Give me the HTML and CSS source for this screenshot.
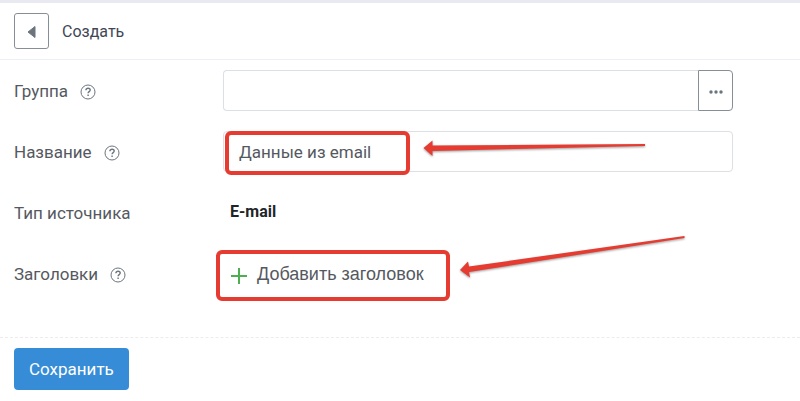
FILE: index.html
```html
<!doctype html>
<html lang="ru">

<head>
    <meta charset="utf-8">
    <title>Создать</title>
    <link rel="stylesheet" href="styles.css">
</head>

<body>
    <header class="header">
        <button class="back" type="button" aria-label="Назад">
            <svg width="10" height="14" viewBox="0 0 10 14"><path d="M8 1.500v11L1 7z" fill="#6c757d" stroke="#6c757d" stroke-linejoin="round"/></svg>
        </button>
        <h1 class="title">Создать</h1>
    </header>

    <form class="form">
        <div class="rows">
            <div class="row">
                <div class="caption">
                    <label for="group">Группа</label>
                    <svg class="help" viewBox="0 0 16 16"><circle cx="8" cy="8" r="7"/><path class="mark" d="M5.9 6.3c.1-1.3 1-2 2.2-2s2.1.7 2.1 1.8c0 1.5-2.1 1.5-2.1 3.2M8.1 10.6v1.4"/></svg>
                </div>
                <div class="field group">
                    <input class="input" id="group" type="text">
                    <button class="more" type="button" aria-label="Выбрать">
                        <svg width="14" height="4" viewBox="0 0 14 4"><g fill="#6c757d"><circle cx="2" cy="2" r="1.7"/><circle cx="7" cy="2" r="1.7"/><circle cx="12" cy="2" r="1.7"/></g></svg>
                    </button>
                </div>
            </div>

            <div class="row">
                <div class="caption">
                    <label for="name">Название</label>
                    <svg class="help" viewBox="0 0 16 16"><circle cx="8" cy="8" r="7"/><path class="mark" d="M5.9 6.3c.1-1.3 1-2 2.2-2s2.1.7 2.1 1.8c0 1.5-2.1 1.5-2.1 3.2M8.1 10.6v1.4"/></svg>
                </div>
                <div class="field">
                    <input class="input" id="name" type="text" value="Данные из email">
                    <span class="frame frame-name"></span>
                    <svg class="arrow arrow-name" width="224" height="20" viewBox="0 0 224 20"><path d="M.5 10L9.500 2.500v5L222 6v2L9.500 13v5z"/></svg>
                </div>
            </div>

            <div class="row">
                <div class="caption">Тип источника</div>
                <div class="field type">E-mail</div>
            </div>

            <div class="row">
                <div class="caption">
                    <span>Заголовки</span>
                    <svg class="help" viewBox="0 0 16 16"><circle cx="8" cy="8" r="7"/><path class="mark" d="M5.9 6.3c.1-1.3 1-2 2.2-2s2.1.7 2.1 1.8c0 1.5-2.1 1.5-2.1 3.2M8.1 10.6v1.4"/></svg>
                </div>
                <div class="field">
                    <button class="add" type="button">
                        <svg class="plus" width="16" height="16" viewBox="0 0 16 16"><path d="M8 0v16M0 8h16" stroke="#4caf50" stroke-width="2"/></svg>
                        Добавить заголовок
                    </button>
                    <span class="frame frame-add"></span>
                    <svg class="arrow arrow-add" width="228" height="46" viewBox="0 0 228 46"><path d="M1 35l8-8.500 1 5L225.500 1v2L10 37l1 5.500z"/></svg>
                </div>
            </div>
        </div>

        <footer class="footer">
            <button class="save" type="submit">Сохранить</button>
        </footer>
    </form>
</body>

</html>
```

FILE: styles.css
```css
* {
    box-sizing: border-box;
}

body {
    margin: 0;
    border-top: 3px solid #e9e9f2;
    background: #fff;
    color: #55595f;
    font: 17px/24px Roboto, "Liberation Sans", sans-serif;
}

button,
input {
    font: inherit;
}

.header {
    display: flex;
    align-items: center;
    gap: 13px;
    padding: 10px 14px;
    border-bottom: 1px solid #eeeef6;
}

.back {
    display: flex;
    align-items: center;
    justify-content: center;
    width: 35px;
    height: 36px;
    padding: 2px 0 0;
    border: 1px solid #868e96;
    border-radius: 3px;
    background: #fff;
}

.title {
    margin: 0;
    padding-top: 2px;
    color: #3f4757;
    font-size: 16px;
    font-weight: 400;
}

.rows {
    display: grid;
    gap: 20px;
    padding: 10px 14px 43px;
}

.row {
    display: grid;
    grid-template-columns: 209px minmax(0, 510px);
    height: 41px;
    align-items: center;
}

.caption {
    display: flex;
    align-items: center;
    gap: 12px;
}

.help {
    width: 16px;
    height: 16px;
    margin-top: 3px;
    fill: none;
    stroke: #6c757d;
}

.mark {
    stroke-width: 1.4;
}

.field {
    position: relative;
}

.group {
    display: flex;
}

.input {
    display: block;
    width: 100%;
    height: 41px;
    padding: 0 15px;
    border: 1px solid #dcdfe3;
    border-radius: 4px;
    background: #fff;
    color: #55595f;
}

.group .input {
    flex: 1;
    min-width: 0;
    border-right: 0;
    border-radius: 4px 0 0 4px;
}

.more {
    display: flex;
    align-items: center;
    justify-content: center;
    width: 35px;
    height: 41px;
    padding: 3px 0 0;
    border: 1px solid #868e96;
    border-radius: 0 4px 4px 0;
    background: #fff;
}

.type {
    padding: 0 7px 2px;
    color: #212529;
    font-size: 16px;
    font-weight: 700;
}

.add {
    display: flex;
    align-items: center;
    gap: 10px;
    padding: 0 8px;
    border: 0;
    background: none;
    color: #55595f;
    font-family: "Liberation Sans", Arial, sans-serif;
    font-size: 18px;
}

.plus {
    margin-top: 4px;
}

/* выделение и стрелки поверх формы */
.frame {
    position: absolute;
    border: 4px solid #e53b30;
    border-radius: 6px;
    pointer-events: none;
}

.frame-name {
    left: 2px;
    top: 0;
    width: 185px;
    height: 44px;
}

.frame-add {
    left: -7px;
    top: -12px;
    width: 234px;
    height: 51px;
}

.arrow {
    position: absolute;
    overflow: visible;
    fill: #e53b30;
    filter: drop-shadow(0 1px 1px rgba(0, 0, 0, .4));
    pointer-events: none;
}

.arrow-name {
    left: 200px;
    top: 7px;
}

.arrow-add {
    left: 236px;
    top: -27px;
}

.footer {
    padding: 10px 14px;
    border-top: 1px dashed #ececef;
}

.save {
    height: 42px;
    padding: 0 15px;
    border: 0;
    border-radius: 4px;
    background: #368cd6;
    color: #fff;
}
```
